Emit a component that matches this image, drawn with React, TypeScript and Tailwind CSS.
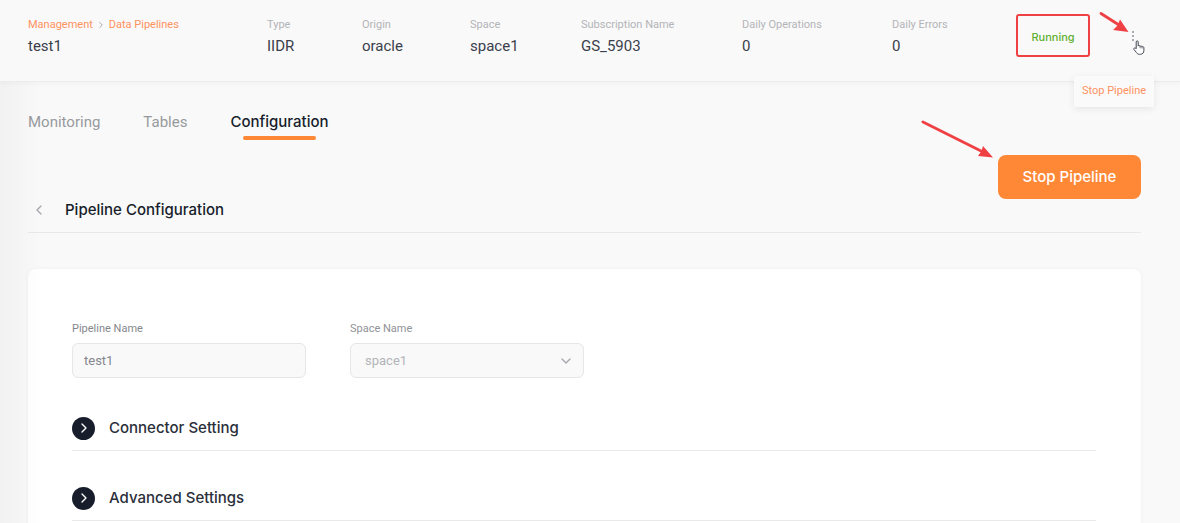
import { useState } from "react";
import type { ReactNode } from "react";
import { ChevronDown, ChevronLeft, ChevronRight } from "lucide-react";

const stats = [
  { label: "Type", value: "IIDR" },
  { label: "Origin", value: "oracle" },
  { label: "Space", value: "space1" },
  { label: "Subscription Name", value: "GS_5903" },
  { label: "Daily Operations", value: "0" },
  { label: "Daily Errors", value: "0" },
];

const tabs = ["Monitoring", "Tables", "Configuration"];

const sections = ["Connector Setting", "Advanced Settings"];

function Stat({ label, value }: { label: ReactNode; value: string }) {
  return (
    <div className="whitespace-nowrap">
      <div className="text-[11px] leading-4 text-[#b3b4b8]">{label}</div>
      <div className="mt-px text-[15px] leading-6 text-[#3a404b]">{value}</div>
    </div>
  );
}

function HandCursor() {
  return (
    <svg viewBox="0 0 12 15" className="h-[15px] w-3" aria-hidden="true">
      <path
        d="M3.2 8.8V1.9c0-1.4 2-1.4 2 0v4.2c.3-.8 1.8-.7 1.9.3.5-.7 1.8-.5 1.9.5.6-.6 1.9-.3 1.9.8v2.6c0 2.4-1.3 4-3.6 4H6.5c-1.5 0-2.3-.6-3-1.7L1 9.5C.3 8.2 1.6 7.4 2.5 8.2z"
        fill="#fff"
        stroke="#454852"
        strokeWidth="1"
        strokeLinejoin="round"
      />
      <path d="M7.1 6.4v1.8M9 6.9v1.6" stroke="#454852" strokeWidth=".8" fill="none" />
    </svg>
  );
}

function Header() {
  const [menuOpen, setMenuOpen] = useState(true);

  return (
    <header className="relative z-10 grid grid-cols-[239fr_95fr_108fr_111fr_161fr_150fr_124fr_74px_51px] border-b border-[#ececec] bg-[#f9f9f9] pt-[17px] pr-[39px] pb-[23px] pl-7 shadow-[0_2px_5px_rgba(0,0,0,0.03)]">
      <Stat
        label={
          <nav className="flex items-center gap-[3px] text-[#ff925f]">
            <a href="#management">Management</a>
            <ChevronRight className="size-2.5 text-[#999ba0]" strokeWidth={2} />
            <a href="#pipelines">Data Pipelines</a>
          </nav>
        }
        value="test1"
      />
      {stats.map((stat) => (
        <Stat key={stat.label} label={stat.label} value={stat.value} />
      ))}
      <div className="-my-[3px] flex h-[43px] items-center justify-center rounded-[3px] border-2 border-[#ef4044] pt-1 font-[Inter,sans-serif] text-[11px] font-medium text-[#5fb030]">
        Running
      </div>
      <div className="relative flex items-start justify-end">
        <button
          aria-label="Pipeline menu"
          aria-expanded={menuOpen}
          onClick={() => setMenuOpen(!menuOpen)}
          className="flex h-[38px] w-4 cursor-pointer flex-col items-center justify-center gap-0.5"
        >
          <span className="size-0.5 bg-[#a9aab2]" />
          <span className="size-0.5 bg-[#a9aab2]" />
          <span className="size-0.5 bg-[#a9aab2]" />
        </button>
        <svg viewBox="0 0 30 22" className="pointer-events-none absolute -top-1.5 right-3 h-[22px] w-[30px]" aria-hidden="true">
          <path d="M2 2.5 L20 14" stroke="#ef4044" strokeWidth="2.8" strokeLinecap="round" />
          <path d="M29.5 21 L14 19 L18.5 14.500 L21 8.500 Z" fill="#ef4044" />
        </svg>
        <span className="pointer-events-none absolute top-[23px] -right-1">
          <HandCursor />
        </span>
        {menuOpen && (
          <div className="absolute top-[59px] -right-[13px] bg-[#fafafa] shadow-[0_2px_7px_rgba(0,0,0,0.08)]">
            <button className="h-[31px] w-20 text-[11px] whitespace-nowrap text-[#ff925f]">Stop Pipeline</button>
          </div>
        )}
      </div>
    </header>
  );
}

function Tabs() {
  const [active, setActive] = useState("Configuration");

  return (
    <nav className="flex items-start gap-[43px] text-[15px] leading-6">
      {tabs.map((tab) => (
        <button
          key={tab}
          onClick={() => setActive(tab)}
          className={tab === active ? "font-[Inter,sans-serif] font-medium text-[#171d2b]" : "text-[#97999e]"}
        >
          {tab}
          {tab === active && <span className="mx-auto mt-0.5 block h-1 w-[73px] rounded-full bg-[#ff8836]" />}
        </button>
      ))}
    </nav>
  );
}

export default function App() {
  return (
    <div className="relative min-h-screen overflow-hidden bg-[#f9f9f9] font-[Roboto,sans-serif]">
      <Header />
      <main className="relative pt-7 pr-[39px] pl-7">
        <Tabs />
        <svg viewBox="0 0 72 38" className="pointer-events-none absolute top-[38px] right-[187px] h-[38px] w-[72px]" aria-hidden="true">
          <path d="M2 2 L60 31" stroke="#ef4044" strokeWidth="2.8" strokeLinecap="round" />
          <path d="M72 37.5 L57 36 L60.5 31 L62 26 Z" fill="#ef4044" />
        </svg>
        <div className="mt-[15px] flex justify-end">
          <button className="h-11 w-[143px] rounded-lg bg-[#ff8836] font-[Inter,sans-serif] text-[15px] font-medium text-white">
            Stop Pipeline
          </button>
        </div>
        <div className="flex h-[34px] items-start gap-4 border-b border-[#e9e9e9]">
          <button aria-label="Back" className="flex h-[22px] w-[21px] items-center justify-center text-[#a5a7ac]">
            <ChevronLeft className="size-4" strokeWidth={2} />
          </button>
          <h1 className="font-[Inter,sans-serif] text-[15px] leading-[22px] font-medium text-[#171d2b]">
            Pipeline Configuration
          </h1>
        </div>
        <section className="mt-9 rounded-lg bg-white pt-[52px] pr-[45px] pb-10 pl-11 shadow-[0_0_5px_rgba(0,0,0,0.04)]">
          <div className="flex gap-11">
            <div className="w-[234px]">
              <label htmlFor="pipeline-name" className="block text-[11px] leading-4 text-[#85878c]">
                Pipeline Name
              </label>
              <input
                id="pipeline-name"
                defaultValue="test1"
                className="mt-1.5 block h-[35px] w-full rounded-md border border-[#e6e6e7] bg-[#f9f9f9] px-[11px] text-[13px] text-[#85878c] outline-none"
              />
            </div>
            <div className="w-[234px]">
              <label htmlFor="space-name" className="block text-[11px] leading-4 text-[#909298]">
                Space Name
              </label>
              <div className="relative mt-1.5">
                <select
                  id="space-name"
                  disabled
                  className="block h-[35px] w-full appearance-none rounded-md border border-[#e6e6e7] bg-[#f9f9f9] px-3.5 text-[13px] text-[#b3b4b8] opacity-100"
                >
                  <option>space1</option>
                </select>
                <ChevronDown className="absolute top-2.5 right-2.5 size-4 text-[#a5a7ac]" strokeWidth={2} />
              </div>
            </div>
          </div>
          <div className="mt-[38px] flex flex-col gap-[35px]">
            {sections.map((section) => (
              <div key={section} className="flex h-[35px] items-start border-b border-[#e9e9e9]">
                <button className="flex items-center gap-3.5 font-[Inter,sans-serif] text-[15px] leading-6 font-medium text-[#2a2f3a]">
                  <span className="flex size-[23px] items-center justify-center rounded-full bg-[#171d2b] text-white">
                    <ChevronRight className="size-4" strokeWidth={2} />
                  </span>
                  {section}
                </button>
              </div>
            ))}
          </div>
        </section>
      </main>
      <div className="pointer-events-none absolute inset-y-0 left-0 w-11 bg-linear-to-r from-black/3 to-transparent" />
    </div>
  );
}
